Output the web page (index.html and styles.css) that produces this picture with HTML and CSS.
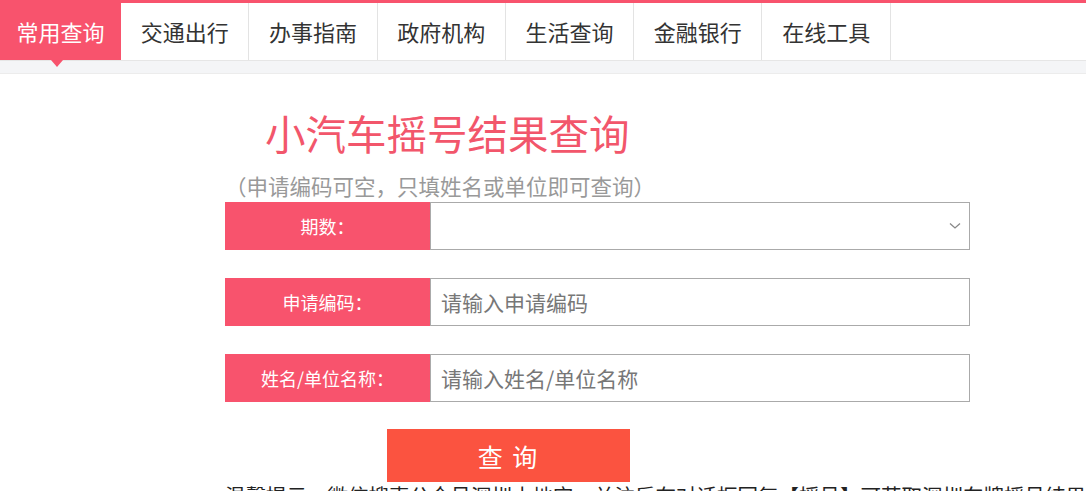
FILE: index.html
```html
<!DOCTYPE html>
<html lang="zh-CN">
<head>
<meta charset="utf-8">
<title>小汽车摇号结果查询</title>
<link rel="stylesheet" href="styles.css">
</head>
<body>
<nav class="tabs">
  <a class="tab active">常用查询</a>
  <a class="tab">交通出行</a>
  <a class="tab">办事指南</a>
  <a class="tab">政府机构</a>
  <a class="tab">生活查询</a>
  <a class="tab">金融银行</a>
  <a class="tab">在线工具</a>
</nav>
<div class="strip"></div>
<main class="main">
  <h1 class="title">小汽车摇号结果查询</h1>
  <p class="sub">（申请编码可空，只填姓名或单位即可查询）</p>
  <form class="form">
    <div class="row">
      <label class="label">期数：</label>
      <div class="select-wrap">
        <select class="field select"><option></option></select>
        <svg class="chev" width="12" height="8" viewBox="0 0 12 8"><path d="M1 1.5 L6 6 L11 1.5" fill="none" stroke="#888" stroke-width="1.3"/></svg>
      </div>
    </div>
    <div class="row">
      <label class="label">申请编码：</label>
      <input class="field" type="text" placeholder="请输入申请编码">
    </div>
    <div class="row">
      <label class="label">姓名/单位名称：</label>
      <input class="field" type="text" placeholder="请输入姓名/单位名称">
    </div>
    <button class="btn" type="button">查 询</button>
  </form>
  <p class="tip">温馨提示：微信搜索公众号深圳本地宝，关注后在对话框回复【摇号】可获取深圳车牌摇号结果查询入口</p>
</main>
</body>
</html>
```
FILE: styles.css
```css
* { box-sizing: border-box; }
html, body { margin: 0; padding: 0; background: #fff; }
body {
  font-family: "Noto Sans CJK SC", "Noto Sans", sans-serif;
  color: #333;
  overflow: hidden;
}
.tabs {
  display: flex;
  border-top: 3px solid #f8536d;
  height: 60px;
  background: #fff;
}
.tab {
  display: flex;
  align-items: center;
  justify-content: center;
  width: 128.3px;
  height: 57px;
  padding-bottom: 2px;
  font-size: 22px;
  color: #333;
  border-right: 1px solid #e3e3e3;
  position: relative;
}
.tab.active {
  width: 121px;
  background: #f8536d;
  color: #fff;
  border-right: none;
}
.tab.active::after {
  content: "";
  position: absolute;
  left: 51px;
  bottom: -7px;
  border-left: 6px solid transparent;
  border-right: 6px solid transparent;
  border-top: 7px solid #f8536d;
  z-index: 2;
}
.strip {
  height: 14px;
  background: #f4f5f7;
  border-top: 1px solid #e6e6e6;
  border-bottom: 1px solid #ececec;
}
.main {
  margin: 29px 0 0 225px;
  width: 745px;
}
.title {
  margin: 0;
  padding-left: 40px;
  font-size: 40.5px;
  font-weight: normal;
  line-height: 60px;
  color: #f2566b;
}
.sub {
  margin: 8px 0 1px;
  font-size: 21.5px;
  line-height: 30px;
  color: #999;
  white-space: nowrap;
}
.form {
  display: flex;
  flex-direction: column;
  gap: 28px;
}
.row {
  display: flex;
  height: 48px;
}
.label {
  width: 205px;
  flex: none;
  background: #f8536d;
  color: #fff;
  font-size: 18px;
  display: flex;
  align-items: center;
  justify-content: center;
}
.field {
  flex: 1;
  height: 48px;
  border: 1px solid #aaa;
  padding: 0 10px;
  font-family: inherit;
  font-size: 21px;
  color: #333;
  background: #fff;
  outline: none;
  border-radius: 0;
}
.field::placeholder { color: #777; }
.select-wrap {
  flex: 1;
  display: flex;
  position: relative;
}
.select {
  appearance: none;
  -webkit-appearance: none;
}
.chev {
  position: absolute;
  right: 9px;
  top: 20px;
}
.btn {
  margin-top: -1px;
  margin-left: 162px;
  width: 243px;
  height: 53px;
  border: none;
  background: #fb5340;
  color: #fff;
  font-family: inherit;
  font-size: 25px;
  letter-spacing: 2px;
}
.tip {
  margin: 0;
  font-size: 20.5px;
  line-height: 26px;
  color: #222;
  white-space: nowrap;
}
```
